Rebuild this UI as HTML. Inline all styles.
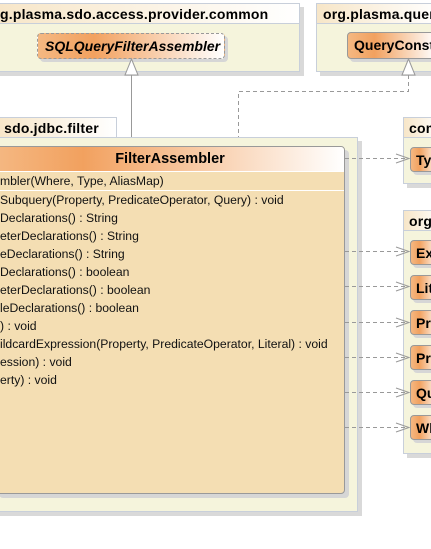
<!DOCTYPE html>
<html><head><meta charset="utf-8"><style>
body{margin:0;width:431px;height:549px;overflow:hidden;background:#fff;font-family:"Liberation Sans",sans-serif;position:relative}
div{position:absolute;box-sizing:border-box}
.pk{background:#f5f4dc;border:1px solid #c8cfda;box-shadow:4px 4px 0 #d9d9d9}
.tab{background:linear-gradient(90deg,#f7e6c8,#fff);border:1px solid #c8cfda;font-weight:bold;font-size:14px;padding:2px 0 0 4px;height:21px;white-space:nowrap;overflow:hidden;letter-spacing:0.2px}
.cl{border:1px solid #999;border-radius:4px;background:linear-gradient(90deg,#f4b882,#f2a15f 30%,#fff);box-shadow:3px 3px 0 #d6d6d6;font-weight:bold;font-size:14px;white-space:nowrap;overflow:hidden;padding:4px 0 0 6px}
.m{font-size:12.2px;left:0;white-space:nowrap;color:#111}
</style></head><body>
<div class="pk" style="left:-5px;top:3px;width:305px;height:69px"></div>
<div class="tab" style="left:-5px;top:3px;width:305px;padding-left:4px">g.plasma.sdo.access.provider.common</div>
<div class="cl" style="left:37px;top:33px;width:188px;height:26px;border:1px dashed #999;font-style:italic;padding-left:7px">SQLQueryFilterAssembler</div>
<div class="pk" style="left:316px;top:3px;width:125px;height:69px"></div>
<div class="tab" style="left:316px;top:3px;width:125px;padding-left:6px">org.plasma.query</div>
<div class="cl" style="left:347px;top:32px;width:90px;height:27px">QueryConstants</div>
<svg width="431" height="549" style="position:absolute;left:0;top:0">
<g stroke="#999" fill="none">
<line x1="131.5" y1="75" x2="131.5" y2="146"/>
<polyline points="408.5,75 408.5,91.5 238.5,91.5 238.5,146" stroke-dasharray="4,3"/>
</g>
<polygon points="131.5,59 125,75 138,75" fill="#fff" stroke="#999"/>
<polygon points="408.5,59 402,75 415,75" fill="#fff" stroke="#999"/>
</svg>
<div class="pk" style="left:-5px;top:137px;width:363px;height:375px"></div>
<div class="tab" style="left:-5px;top:117px;width:122px;height:21px">&nbsp;sdo.jdbc.filter</div>
<div style="left:-5px;top:146px;width:350px;height:348px;background:#f4deb3;border:1px solid #999;border-radius:4px;box-shadow:4px 4px 0 #d6d6d6"></div>
<div style="left:-4px;top:147px;width:348px;height:25px;background:linear-gradient(90deg,#f4b882,#f2a15f 25%,#fff);border-radius:3px 3px 0 0;border-bottom:1px solid #fff;font-weight:bold;font-size:14.5px;text-align:center;padding-top:4px">FilterAssembler</div>
<div style="left:-4px;top:172px;width:348px;height:19px;border-bottom:1px solid #fff"></div>
<div class="m" style="top:174px">mbler(Where, Type, AliasMap)</div>
<div class="m" style="top:193px">Subquery(Property, PredicateOperator, Query) : void</div>
<div class="m" style="top:211px">Declarations() : String</div>
<div class="m" style="top:229px">eterDeclarations() : String</div>
<div class="m" style="top:247px">eDeclarations() : String</div>
<div class="m" style="top:265px">Declarations() : boolean</div>
<div class="m" style="top:283px">eterDeclarations() : boolean</div>
<div class="m" style="top:301px">leDeclarations() : boolean</div>
<div class="m" style="top:319px">) : void</div>
<div class="m" style="top:337px">ildcardExpression(Property, PredicateOperator, Literal) : void</div>
<div class="m" style="top:355px">ession) : void</div>
<div class="m" style="top:373px">erty) : void</div>
<div class="pk" style="left:403px;top:117px;width:40px;height:67px"></div>
<div class="tab" style="left:403px;top:117px;width:40px;height:21px;padding-left:5px">common</div>
<div class="cl" style="left:410px;top:147px;width:30px;height:25px;padding:4px 0 0 5px">Type</div>
<div class="pk" style="left:403px;top:210px;width:40px;height:244px"></div>
<div class="tab" style="left:403px;top:210px;width:40px;height:21px;padding-left:5px">org</div>
<div class="cl" style="left:410px;top:240px;width:30px;height:25px;padding:4px 0 0 5px">Ex</div>
<div class="cl" style="left:410px;top:275px;width:30px;height:25px;padding:4px 0 0 5px">Lit</div>
<div class="cl" style="left:410px;top:310px;width:30px;height:25px;padding:4px 0 0 5px">Pr</div>
<div class="cl" style="left:410px;top:345px;width:30px;height:25px;padding:4px 0 0 5px">Pr</div>
<div class="cl" style="left:410px;top:380px;width:30px;height:25px;padding:4px 0 0 5px">Qu</div>
<div class="cl" style="left:410px;top:415px;width:30px;height:25px;padding:4px 0 0 5px">Wh</div>
<svg width="431" height="549" style="position:absolute;left:0;top:0">
<g stroke="#999" fill="none">
<g stroke-dasharray="4,3">
<line x1="345" y1="158.5" x2="409" y2="158.5"/>
<line x1="345" y1="251.5" x2="409" y2="251.5"/>
<line x1="345" y1="286.5" x2="409" y2="286.5"/>
<line x1="345" y1="322.5" x2="409" y2="322.5"/>
<line x1="345" y1="357.5" x2="409" y2="357.5"/>
<line x1="345" y1="392.5" x2="409" y2="392.5"/>
<line x1="345" y1="427.5" x2="409" y2="427.5"/>
</g>
<polyline points="396,154 409,158.5 396,163"/>
<polyline points="396,247 409,251.5 396,256"/>
<polyline points="396,282 409,286.5 396,291"/>
<polyline points="396,318 409,322.5 396,327"/>
<polyline points="396,353 409,357.5 396,362"/>
<polyline points="396,388 409,392.5 396,397"/>
<polyline points="396,423 409,427.5 396,432"/>
</g>
</svg>
</body></html>
